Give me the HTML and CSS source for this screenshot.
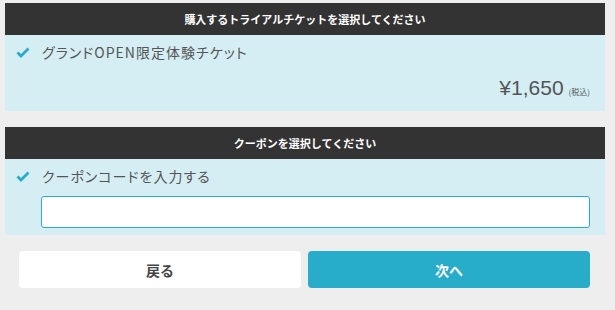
FILE: index.html
```html
<!DOCTYPE html>
<html lang="ja">
<head>
    <meta charset="UTF-8">
    <meta name="viewport" content="width=device-width, initial-scale=1.0">
    <title>チケット選択</title>
    <link rel="stylesheet" href="styles.css">
</head>
<body>

<div class="container">

    <!-- チケット選択 -->
    <section class="block">
        <h2 class="block-title">購入するトライアルチケットを選択してください</h2>
        <div class="block-body">
            <div class="check-row">
                <svg class="check" viewBox="0 0 14 11" width="14" height="11">
                    <path d="M1.5 5.5 L5 9 L12.5 1.5" fill="none" stroke="#27acca" stroke-width="2.8"/>
                </svg>
                <span class="check-label">グランドOPEN限定体験チケット</span>
            </div>
            <div class="price">¥1,650<span class="tax">(税込)</span></div>
        </div>
    </section>

    <!-- クーポン -->
    <section class="block">
        <h2 class="block-title">クーポンを選択してください</h2>
        <div class="block-body">
            <div class="check-row">
                <svg class="check" viewBox="0 0 14 11" width="14" height="11">
                    <path d="M1.5 5.5 L5 9 L12.5 1.5" fill="none" stroke="#27acca" stroke-width="2.8"/>
                </svg>
                <span class="check-label">クーポンコードを入力する</span>
            </div>
            <input type="text" class="coupon-input" autofocus>
        </div>
    </section>

    <div class="actions">
        <button class="btn btn-back">戻る</button>
        <button class="btn btn-next">次へ</button>
    </div>

</div>

</body>
</html>
```

FILE: styles.css
```css
body {
    font-family: "Noto Sans CJK JP", "Noto Sans", sans-serif;
    background-color: #eeeeee;
    margin: 0;
    color: #555;
}

.container {
    width: 600px;
    margin: 3px 0 0 5px;
}

.block {
    margin-bottom: 16px;
}

.block-title {
    margin: 0;
    height: 32px;
    line-height: 32px;
    background-color: #333333;
    color: #fff;
    font-size: 11px;
    font-weight: bold;
    text-align: center;
}

.block-body {
    background-color: #d4eef3;
    padding: 6px 15px 7px 10px;
}

.check-row {
    display: flex;
    align-items: center;
    height: 22px;
}

.check {
    margin: 0 12px 0 1px;
    flex: none;
}

.check-label {
    font-size: 14px;
    letter-spacing: 1px;
    font-feature-settings: "palt";
}

.price {
    text-align: right;
    font-family: "Liberation Sans", "Noto Sans CJK JP", sans-serif;
    font-size: 21px;
    line-height: 26px;
    margin-top: 12px;
    padding-bottom: 3px;
}

.tax {
    font-family: "Noto Sans CJK JP", sans-serif;
    font-size: 8px;
    line-height: 1;
    margin-left: 5px;
}

.coupon-input {
    display: block;
    box-sizing: border-box;
    width: 549px;
    height: 32px;
    margin: 9px 0 0 26px;
    border: 1px solid #27acca;
    border-radius: 3px;
    background: #fff;
    outline: none;
    padding: 0 8px;
    font-size: 14px;
}

.actions {
    display: flex;
    gap: 7px;
    padding: 0 15px 0 14px;
}

.btn {
    flex: 1;
    height: 37px;
    border: none;
    border-radius: 4px;
    font-family: "Noto Sans CJK JP", sans-serif;
    font-size: 14px;
    font-weight: bold;
    cursor: pointer;
}

.btn-back {
    background-color: #fff;
    color: #444;
}

.btn-next {
    background-color: #27acca;
    color: #fff;
}
```
